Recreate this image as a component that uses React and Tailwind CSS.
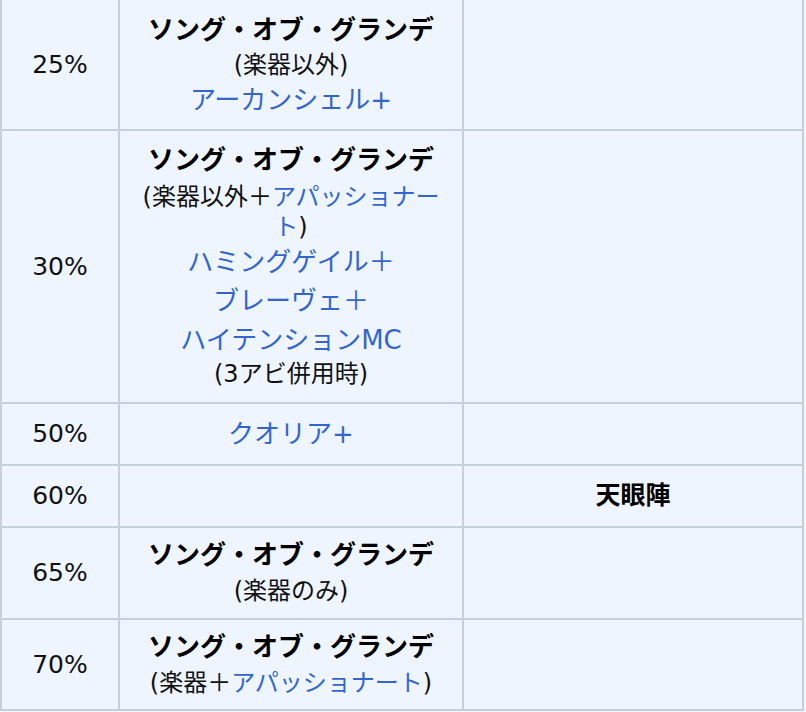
const font = "font-['DejaVu_Sans','Noto_Sans_CJK_JP',sans-serif]"

function Link({ children }) {
  return <span className="text-[#3366cc]">{children}</span>
}

function Cell({ children, className = '' }) {
  return (
    <div className={'bg-[#eef5fe] flex flex-col items-center justify-center text-center ' + className}>
      {children}
    </div>
  )
}

function Pct({ value }) {
  return <Cell className="text-[25px] leading-[30px] text-[#111]">{value}</Cell>
}

function Title({ className = '' }) {
  return (
    <div className={'text-[26px] leading-[30px] font-bold text-black ' + className}>
      ソング・オブ・グランデ
    </div>
  )
}

function Note({ children, className = '' }) {
  return <div className={'text-[24px] leading-[30px] text-[#111] ' + className}>{children}</div>
}

function BigLink({ children, className = '' }) {
  return (
    <div className={'text-[26px] leading-[30px] text-[#3366cc] ' + className}>{children}</div>
  )
}

export default function App() {
  return (
    <div className={'w-[806px] h-[712px] bg-[#f3f7fc] overflow-hidden ' + font}>
      <div className="grid grid-cols-[116px_342px_338px] grid-rows-[129px_271px_60px_60px_90px_89px] gap-[2px] px-[2px] pb-[2px] bg-[#c6d0dc] w-[804px]">
        {/* 25% */}
        <Pct value="25%" />
        <Cell>
          <Title />
          <Note className="mt-[5px]">(楽器以外)</Note>
          <BigLink className="mt-[5px]">アーカンシェル+</BigLink>
        </Cell>
        <Cell />

        {/* 30% */}
        <Pct value="30%" />
        <Cell>
          <Title />
          <Note className="mt-[7px]">
            (楽器以外＋<Link>アパッショナー</Link>
          </Note>
          <Note>
            <Link>ト</Link>)
          </Note>
          <BigLink className="mt-[5px]">ハミングゲイル＋</BigLink>
          <BigLink className="mt-[9px]">ブレーヴェ＋</BigLink>
          <BigLink className="mt-[9px]">ハイテンションMC</BigLink>
          <Note className="mt-[4px]">(3アビ併用時)</Note>
        </Cell>
        <Cell />

        {/* 50% */}
        <Pct value="50%" />
        <Cell>
          <BigLink>クオリア+</BigLink>
        </Cell>
        <Cell />

        {/* 60% */}
        <Pct value="60%" />
        <Cell />
        <Cell>
          <div className="text-[25px] leading-[30px] font-bold text-black">天眼陣</div>
        </Cell>

        {/* 65% */}
        <Pct value="65%" />
        <Cell>
          <Title />
          <Note className="mt-[6px]">(楽器のみ)</Note>
        </Cell>
        <Cell />

        {/* 70% */}
        <Pct value="70%" />
        <Cell>
          <Title />
          <Note className="mt-[6px]">
            (楽器＋<Link>アパッショナート</Link>)
          </Note>
        </Cell>
        <Cell />
      </div>
    </div>
  )
}
